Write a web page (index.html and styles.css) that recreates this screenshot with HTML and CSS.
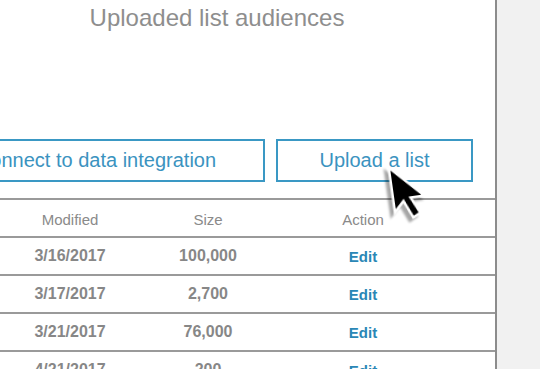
FILE: index.html
```html
<!DOCTYPE html>
<html lang="en">
<head>
  <meta charset="UTF-8">
  <title>Uploaded list audiences</title>
  <link rel="stylesheet" href="styles.css">
</head>
<body>
  <div class="panel">
    <h2 class="title">Uploaded list audiences</h2>

    <div class="actions">
      <button class="btn btn-wide">Connect to data integration</button>
      <button class="btn">Upload a list</button>
    </div>

    <div class="list">
      <div class="row head">
        <span>Name</span>
        <span>Modified</span>
        <span>Size</span>
        <span>Action</span>
        <span></span>
      </div>
      <div class="row">
        <span></span>
        <span>3/16/2017</span>
        <span>100,000</span>
        <a class="edit" href="#">Edit</a>
        <span></span>
      </div>
      <div class="row">
        <span></span>
        <span>3/17/2017</span>
        <span>2,700</span>
        <a class="edit" href="#">Edit</a>
        <span></span>
      </div>
      <div class="row">
        <span></span>
        <span>3/21/2017</span>
        <span>76,000</span>
        <a class="edit" href="#">Edit</a>
        <span></span>
      </div>
      <div class="row">
        <span></span>
        <span>4/21/2017</span>
        <span>200</span>
        <a class="edit" href="#">Edit</a>
        <span></span>
      </div>
    </div>
  </div>

  <svg class="cursor" width="40" height="60" viewBox="0 0 32 48">
    <path d="M3 3 L3 39 L11 31 L17 45 L23 42 L17 29 L28 29 Z" fill="#000" stroke="#fff" stroke-width="2" stroke-linejoin="miter"/>
  </svg>
</body>
</html>
```

FILE: styles.css
```css
body {
  margin: 0;
  height: 369px;
  overflow: hidden;
  background: #f1f1f1;
  font-family: "Liberation Sans", Arial, sans-serif;
}
.panel {
  margin-left: -61px;
  width: 556px;
  height: 369px;
  background: #fff;
  border-right: 2px solid #8c8c8c;
}
.title {
  margin: 0;
  padding-top: 4px;
  font-size: 24px;
  line-height: 28px;
  font-weight: normal;
  color: #8e8e8e;
  text-align: center;
}
.actions {
  display: flex;
  justify-content: flex-end;
  gap: 11px;
  margin-top: 107px;
  padding-right: 22px;
}
.btn {
  flex: none;
  width: 197px;
  height: 43px;
  background: #fff;
  border: 2px solid #3a98c4;
  color: #3b93bf;
  font-family: inherit;
  font-size: 20px;
  padding: 0;
}
.btn-wide {
  width: 338px;
}
.list {
  margin-top: 16px;
  border-top: 2px solid #9a9a9a;
}
.row {
  display: grid;
  grid-template-columns: 61px 140px 136px 174px 1fr;
  align-items: center;
  height: 36px;
  border-bottom: 2px solid #9a9a9a;
  font-size: 16px;
  font-weight: bold;
  color: #878787;
  text-align: center;
}
.row.head {
  padding-top: 3px;
  height: 33px;
  font-size: 15px;
  font-weight: normal;
  color: #8a8a8a;
}
.edit {
  color: #2a87b6;
  font-size: 15px;
  text-decoration: none;
}
.cursor {
  position: absolute;
  left: 385px;
  top: 164px;
  transform: rotate(-8deg);
  transform-origin: 4px 4px;
  filter: drop-shadow(-4px 3px 1px rgba(0, 0, 0, 0.35));
}
```
